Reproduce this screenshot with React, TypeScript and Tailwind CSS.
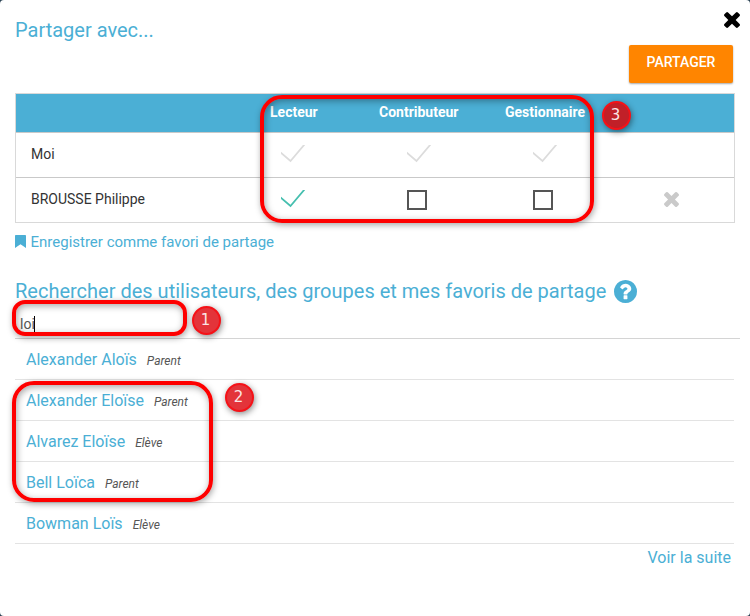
import React from "react";

const people = [
  { name: "Alexander Aloïs", role: "Parent" },
  { name: "Alexander Eloïse", role: "Parent" },
  { name: "Alvarez Eloïse", role: "Elève" },
  { name: "Bell Loïca", role: "Parent" },
  { name: "Bowman Loïs", role: "Elève" },
];

function Cross({ className }: { className: string }) {
  return (
    <svg className={className} viewBox="110 366 1188 1188" fill="currentColor">
      <path d="M1298 1322q0 40-28 68l-136 136q-28 28-68 28t-68-28l-294-294-294 294q-28 28-68 28t-68-28l-136-136q-28-28-28-68t28-68l294-294-294-294q-28-28-28-68t28-68l136-136q28-28 68-28t68 28l294 294 294-294q28-28 68-28t68 28l136 136q28 28 28 68t-28 68l-294 294 294 294q28 28 28 68z" />
    </svg>
  );
}

function Check({ className }: { className: string }) {
  return (
    <svg className={className} viewBox="0 0 24 18" fill="none" stroke="currentColor" strokeWidth="1.8">
      <path d="M-0.500 7.500L9.500 16L23.500 -0.500" />
    </svg>
  );
}

function Box() {
  return <div className="mt-[12px] h-5 w-5 border-2 border-[#555]" />;
}

function Help() {
  return (
    <svg className="h-[23px] w-[23px] text-[#4bafd5]" viewBox="128 128 1536 1536" fill="currentColor">
      <path d="M1024 1376v-192q0-14-9-23t-23-9h-192q-14 0-23 9t-9 23v192q0 14 9 23t23 9h192q14 0 23-9t9-23zm256-672q0-88-55.500-163t-138.500-116-170-41q-243 0-371 213-15 24 8 42l132 100q7 6 19 6 16 0 25-12 53-68 86-92 34-24 86-24 48 0 85.500 26t37.500 59q0 38-20 61t-68 45q-63 28-115.500 86.500t-52.500 125.500v36q0 14 9 23t23 9h192q14 0 23-9t9-23q0-19 21.500-49.500t54.500-49.500q32-18 49-28.500t46-35 44.500-48 28-60.500 12.500-81zm384 192q0 209-103 385.500t-279.500 279.500-385.500 103-385.500-103-279.500-279.500-103-385.500 103-385.500 279.500-279.500 385.500-103 385.500 103 279.500 279.500 103 385.500z" />
    </svg>
  );
}

function Frame({ className }: { className: string }) {
  return (
    <div
      className={`pointer-events-none absolute border-4 border-[#fe0000] shadow-[1px_2px_6px_rgba(0,0,0,0.35),inset_1px_2px_7px_rgba(0,0,0,0.35)] ${className}`}
    />
  );
}

function Badge({ label, className }: { label: string; className: string }) {
  return (
    <div
      className={`absolute flex h-[29px] w-[29px] items-center justify-center rounded-full border-2 border-[#f51218] pr-px font-['DejaVu_Sans',sans-serif] text-[15px] leading-none text-[#fbe4e4] shadow-[1px_2px_6px_rgba(0,0,0,0.45)] ${className}`}
    >
      {label}
    </div>
  );
}

export default function App() {
  return (
    <div className="h-[616px] w-[750px] overflow-hidden bg-[#2b4253] font-[Roboto,sans-serif]">
      <div className="relative flex h-full flex-col rounded-[4px] bg-white pl-[15px]">
        <div className="flex h-[93px] justify-between">
          <h1 className="pt-[16px] text-[20px] leading-[28px] text-[#4bafd5]">Partager avec...</h1>
          <div className="flex w-[121px] flex-col pt-[12px]">
            <button className="ml-[95px] h-4 w-4 text-black">
              <Cross className="h-4 w-4" />
            </button>
            <button className="mt-[17px] h-[38px] w-[104px] rounded-[2px] bg-[#ff8500] pb-[3px] text-[14px] font-medium text-white shadow-[0_1px_2px_rgba(0,0,0,0.35)]">
              PARTAGER
            </button>
          </div>
        </div>

        <div className="h-[130px] w-[720px] border border-[#d9d9d9] text-[14px] text-[#333]">
          <div className="flex h-[39px] border-b border-[#c9c9c9] bg-[#4bafd5] pt-[8px] font-bold leading-[20px] text-white">
            <div className="w-[254px]" />
            <div className="w-[109px]">Lecteur</div>
            <div className="w-[126px]">Contributeur</div>
            <div>Gestionnaire</div>
          </div>
          <div className="flex h-[45px] border-b border-[#c9c9c9]">
            <div className="w-[265px] pl-[15px] leading-[43px]">Moi</div>
            <div className="w-[126px] pt-[12px]"><Check className="h-[18px] w-6 text-[#dcdcdc]" /></div>
            <div className="w-[126px] pt-[12px]"><Check className="h-[18px] w-6 text-[#dcdcdc]" /></div>
            <div className="pt-[12px]"><Check className="h-[18px] w-6 text-[#dcdcdc]" /></div>
          </div>
          <div className="flex h-[44px]">
            <div className="w-[265px] pl-[15px] leading-[43px]">BROUSSE Philippe</div>
            <div className="w-[126px] pt-[12px]"><Check className="h-[18px] w-6 text-[#46bfaf]" /></div>
            <div className="w-[126px]"><Box /></div>
            <div className="w-[131px]"><Box /></div>
            <Cross className="mt-[14px] h-[15px] w-[15px] text-[#cacaca]" />
          </div>
        </div>

        <div className="flex h-[56px] pt-[9px] text-[15px] leading-[20px] text-[#4bafd5]">
          <svg className="mr-[4.500px] mt-[3px] h-[13px] w-[11px]" viewBox="0 0 11 13" fill="currentColor">
            <path d="M0.800 0h9.400q.8 0 .8.800V13L5.500 9.300L0 13V.8Q0 0 .8 0z" />
          </svg>
          Enregistrer comme favori de partage
        </div>

        <div className="flex h-[34px] items-start">
          <h2 className="mr-[8px] whitespace-nowrap text-[20px] leading-[25px] text-[#4bafd5]">
            Rechercher des utilisateurs, des groupes et mes favoris de partage
          </h2>
          <div className="pt-px"><Help /></div>
        </div>

        <div className="flex h-[26px] w-[725px] items-start border-b border-[#d4d4d4] pl-[5px] pt-[3px] text-[14px] leading-[16px] text-[#555]">
          <span className="w-[15px] border-r border-black">loi</span>
        </div>

        <div className="w-[719px]">
          {people.map((p) => (
            <div key={p.name} className="flex h-[41px] items-baseline border-b border-[#e3e3e3] pl-[11px] leading-[42px]">
              <span className="mr-[10px] text-[16px] text-[#4bafd5]">{p.name}</span>
              <span className="text-[12px] italic text-[#555]">{p.role}</span>
            </div>
          ))}
        </div>
        <div className="w-[716px] pt-[4px] text-right text-[16px] leading-[20px] text-[#4bafd5]">Voir la suite</div>

        <Frame className="left-[260px] top-[95px] h-[128px] w-[334px] rounded-[22px]" />
        <Frame className="left-[12px] top-[300px] h-[36px] w-[175px] rounded-[13px]" />
        <Frame className="left-[12px] top-[381px] h-[121px] w-[201px] rounded-[22px]" />
        <Badge label="3" className="left-[601.500px] top-[100.500px] bg-[#c12028]" />
        <Badge label="1" className="left-[191.500px] top-[305.500px] bg-[#e3343a]" />
        <Badge label="2" className="left-[224.500px] top-[382.500px] bg-[#e3343a]" />
      </div>
    </div>
  );
}
